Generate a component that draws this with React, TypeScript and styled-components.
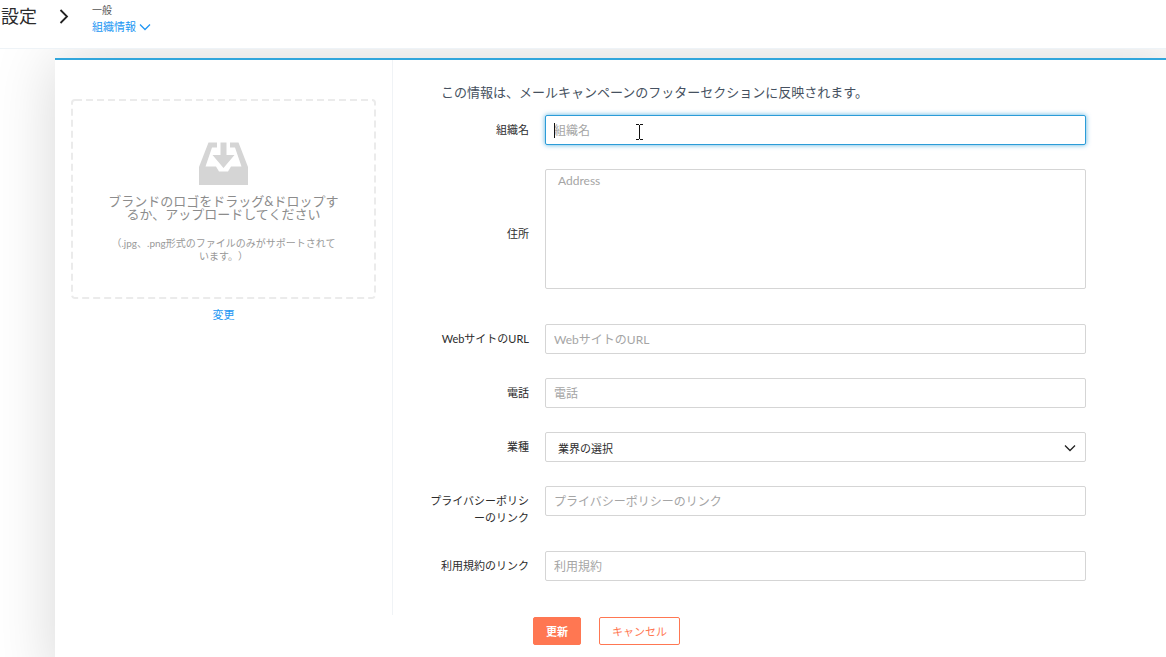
import React from 'react';
import styled, { createGlobalStyle, css } from 'styled-components';

const GlobalStyle = createGlobalStyle`
  * {
    box-sizing: border-box;
  }
  body {
    margin: 0;
    background: #fff;
    color: #2c2c2c;
    font-family: Lato, 'Noto Sans CJK JP', sans-serif;
    font-size: 11px;
    line-height: 17px;
    text-spacing-trim: space-all;
  }
  input, textarea, select, button {
    font-family: inherit;
    margin: 0;
  }
`;

const Page = styled.div`
  min-height: 100vh;
  overflow: hidden;
  display: flex;
  flex-direction: column;
`;

const Header = styled.header`
  position: relative;
  z-index: 1;
  display: flex;
  height: 49px;
  padding-left: 1px;
  background: #fff;
  border-bottom: 1px solid #eef3f7;
`;

const Title = styled.h1`
  margin: 0;
  width: 58px;
  font-size: 18px;
  font-weight: 400;
  line-height: 32px;
`;

const TitleChevron = styled.svg`
  width: 10px;
  height: 16px;
  margin-top: 8px;
`;

const Crumbs = styled.nav`
  display: flex;
  flex-direction: column;
  align-items: flex-start;
  margin-left: 23px;
  padding-top: 1px;
`;

const CrumbGroup = styled.span`
  font-size: 10px;
  line-height: 18px;
  color: #555;
`;

const CrumbLink = styled.a`
  display: flex;
  align-items: center;
  gap: 3px;
  line-height: 16px;
  color: #2196f3;
  text-decoration: none;
`;

const Panel = styled.main`
  margin: 9px -16px 0 55px;
  padding-bottom: 40px;
  background: #fff;
  border-top: 2px solid #31a6dc;
  box-shadow: 0 0 60px rgba(0, 0, 0, 0.16);
`;

const Body = styled.div`
  display: grid;
  grid-template-columns: 338px minmax(0, 1fr);
`;

const LogoColumn = styled.section`
  display: flex;
  flex-direction: column;
  align-items: center;
  gap: 7px;
  padding: 39px 16px 0;
  border-right: 1px solid #f0f3f6;
`;

const DropFrame = styled.div`
  position: relative;
  width: 100%;
  height: 200px;
`;

const DropOutline = styled.svg`
  position: absolute;
  inset: 0;
  width: 100%;
  height: 100%;
`;

const DropZone = styled.div`
  display: flex;
  flex-direction: column;
  align-items: center;
  height: 100%;
  padding: 43px 34px 0;
  text-align: center;
  line-height: 13px;
`;

const TrayIcon = styled.svg`
  width: 49px;
  height: 43px;
  margin-bottom: 10px;
`;

const DropText = styled.p`
  margin: 0 0 16px;
  font-size: 13px;
  color: #8c8c8c;
`;

const DropHint = styled.p`
  margin: 0;
  padding: 0 5px;
  font-size: 10px;
  color: #999;
`;

const ChangeLink = styled.a`
  color: #2196f3;
  text-decoration: none;
`;

const Fields = styled.div`
  display: flex;
  flex-direction: column;
  gap: 24px;
  padding: 20px 96px 34px 35px;
`;

const Intro = styled.p`
  margin: 0 0 -13px 13px;
  font-size: 13px;
  line-height: 24px;
  color: #465160;
`;

const Row = styled.div<{ $tall?: boolean }>`
  display: grid;
  grid-template-columns: 101px minmax(0, 1fr);
  column-gap: 16px;
  align-items: ${(p) => (p.$tall ? 'center' : 'start')};
`;

const Label = styled.label<{ $centered?: boolean }>`
  padding: ${(p) => (p.$centered ? '0 0 2px' : '6px 0 1px')};
  text-align: right;
`;

const Control = styled.div<{ $spaced?: boolean }>`
  position: relative;
  display: flex;
  padding-bottom: ${(p) => (p.$spaced ? '11px' : '0')};
`;

const fieldStyle = css`
  width: 100%;
  border: 1px solid #d5d5d5;
  border-radius: 2px;
  background: #fff;
  color: #2c2c2c;
  outline: none;
  &::placeholder {
    color: #a5a5a5;
    opacity: 1;
  }
`;

const TextInput = styled.input<{ $active?: boolean }>`
  ${fieldStyle}
  height: 30px;
  padding: 0 8px;
  font-size: 12px;
  ${(p) =>
    p.$active &&
    css`
      border-color: #2b9cd8;
      box-shadow: 0 0 5px rgba(43, 156, 216, 0.8);
    `}
`;

const TextArea = styled.textarea`
  ${fieldStyle}
  height: 120px;
  padding: 2px 12px;
  font-size: 12px;
  line-height: 17px;
  resize: none;
`;

const Select = styled.select`
  ${fieldStyle}
  appearance: none;
  height: 30px;
  padding: 2px 32px 0 12px;
  font-size: 11px;
`;

const SelectChevron = styled.svg`
  position: absolute;
  right: 10px;
  top: 12px;
  width: 12px;
  height: 8px;
  pointer-events: none;
`;

const Caret = styled.span`
  position: absolute;
  left: 9px;
  top: 8px;
  width: 1px;
  height: 15px;
  background: #111;
`;

const Pointer = styled.svg`
  position: absolute;
  left: 91px;
  top: 9px;
  width: 7px;
  height: 16px;
  pointer-events: none;
`;

const Actions = styled.div`
  display: flex;
  gap: 18px;
  padding: 2px 0 0 478px;
`;

const Button = styled.button<{ $primary?: boolean }>`
  height: 28px;
  padding: 0 12px;
  border: 1px solid #ff7752;
  border-radius: 2px;
  font-size: 11px;
  font-weight: ${(p) => (p.$primary ? 700 : 400)};
  color: ${(p) => (p.$primary ? '#fff' : '#ff7752')};
  background: ${(p) => (p.$primary ? '#ff7752' : '#fff')};
  cursor: pointer;
`;

type FieldProps = {
  id: string;
  label: string;
  placeholder: string;
  type?: string;
};

function Field({ id, label, placeholder, type = 'text' }: FieldProps) {
  return (
    <Row>
      <Label htmlFor={id}>{label}</Label>
      <Control>
        <TextInput id={id} type={type} placeholder={placeholder} />
      </Control>
    </Row>
  );
}

export default function App() {
  return (
    <Page>
      <GlobalStyle />
      <Header>
        <Title>設定</Title>
        <TitleChevron viewBox="0 0 10 16" fill="none" stroke="#222" strokeWidth="1.8" aria-hidden="true">
          <path d="M1.5 2L8 8.5L1.5 15" />
        </TitleChevron>
        <Crumbs>
          <CrumbGroup>一般</CrumbGroup>
          <CrumbLink href="#organization">
            組織情報
            <svg width="12" height="8" viewBox="0 0 12 8" fill="none" stroke="#2196f3" strokeWidth="1.3" aria-hidden="true">
              <path d="M1 1.5L6 6.5L11 1.5" />
            </svg>
          </CrumbLink>
        </Crumbs>
      </Header>

      <Panel>
        <form onSubmit={(e) => e.preventDefault()}>
          <Body>
            <LogoColumn>
              <DropFrame>
                <DropOutline aria-hidden="true">
                  <rect
                    x="1"
                    y="1"
                    rx="3"
                    style={{ width: 'calc(100% - 2px)', height: 'calc(100% - 2px)' }}
                    fill="none"
                    stroke="#ebebeb"
                    strokeWidth="2"
                    strokeDasharray="7 4"
                  />
                </DropOutline>
                <DropZone>
                  <TrayIcon viewBox="0 0 49 43" fill="#d5d5d5" aria-hidden="true">
                    <path d="M9.5 0.5H18V5.5H13L6.5 24.5H17L20 29.5H29L32 24.5H42.5L36 5.5H31V0.5H39.5L49 25V43H0V25Z" />
                    <path d="M21.5 0.5H27.5V13H35.5L24.5 26L13.5 13H21.5Z" />
                  </TrayIcon>
                  <DropText>ブランドのロゴをドラッグ&amp;ドロップするか、アップロードしてください</DropText>
                  <DropHint>（.jpg、.png形式のファイルのみがサポートされています。）</DropHint>
                </DropZone>
              </DropFrame>
              <ChangeLink href="#change-logo">変更</ChangeLink>
            </LogoColumn>

            <Fields>
              <Intro>この情報は、メールキャンペーンのフッターセクションに反映されます。</Intro>
              <Row>
                <Label htmlFor="org">組織名</Label>
                <Control>
                  <TextInput id="org" type="text" placeholder="組織名" $active />
                  <Caret />
                  <Pointer viewBox="0 0 7 16" fill="none" stroke="#111" aria-hidden="true">
                    <path d="M0 0.5H3M4 0.5H7M3.5 1V15M0 15.5H3M4 15.5H7" />
                  </Pointer>
                </Control>
              </Row>
              <Row $tall>
                <Label htmlFor="address" $centered>住所</Label>
                <Control $spaced>
                  <TextArea id="address" placeholder="Address" />
                </Control>
              </Row>
              <Field id="url" label="WebサイトのURL" placeholder="WebサイトのURL" />
              <Field id="phone" label="電話" placeholder="電話" type="tel" />
              <Row>
                <Label htmlFor="industry">業種</Label>
                <Control>
                  <Select id="industry" defaultValue="">
                    <option value="">業界の選択</option>
                  </Select>
                  <SelectChevron viewBox="0 0 12 8" fill="none" stroke="#222" strokeWidth="1.3" aria-hidden="true">
                    <path d="M1 1.5L6 6.5L11 1.5" />
                  </SelectChevron>
                </Control>
              </Row>
              <Field id="privacy" label="プライバシーポリシーのリンク" placeholder="プライバシーポリシーのリンク" />
              <Field id="terms" label="利用規約のリンク" placeholder="利用規約" />
            </Fields>
          </Body>

          <Actions>
            <Button type="submit" $primary>更新</Button>
            <Button type="button">キャンセル</Button>
          </Actions>
        </form>
      </Panel>
    </Page>
  );
}
